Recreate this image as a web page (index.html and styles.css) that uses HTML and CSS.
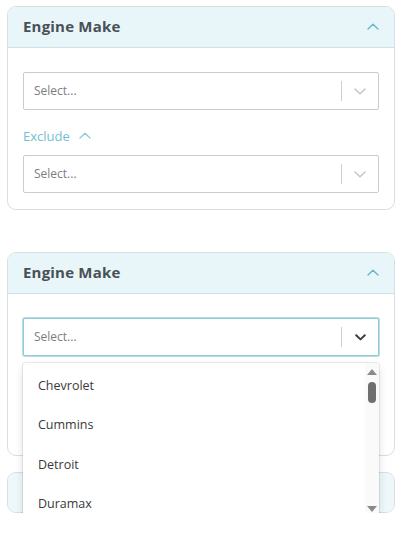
FILE: index.html
```html
<!DOCTYPE html>
<html>
<head>
<meta charset="utf-8">
<link rel="stylesheet" href="styles.css">
</head>
<body>
<div class="page">
  <section class="card">
    <header class="card-header">
      <span class="card-title">Engine Make</span>
      <svg class="hdr-chev" width="12" height="7" viewBox="0 0 12 7"><path d="M1 6 L6 1.2 L11 6" fill="none" stroke="currentColor" stroke-width="1.4" stroke-linecap="round" stroke-linejoin="round"/></svg>
    </header>
    <div class="card-body">
      <div class="select">
        <span class="placeholder">Select...</span>
        <span class="sep"></span>
        <span class="indicator"><svg width="12" height="7" viewBox="0 0 12 7"><path d="M1 1 L6 5.8 L11 1" fill="none" stroke="currentColor" stroke-width="1.4" stroke-linecap="round" stroke-linejoin="round"/></svg></span>
      </div>
      <div class="exclude">
        <span>Exclude</span>
        <svg width="12" height="7" viewBox="0 0 12 7"><path d="M1 6 L6 1.2 L11 6" fill="none" stroke="currentColor" stroke-width="1.3" stroke-linecap="round" stroke-linejoin="round"/></svg>
      </div>
      <div class="select">
        <span class="placeholder">Select...</span>
        <span class="sep"></span>
        <span class="indicator"><svg width="12" height="7" viewBox="0 0 12 7"><path d="M1 1 L6 5.8 L11 1" fill="none" stroke="currentColor" stroke-width="1.4" stroke-linecap="round" stroke-linejoin="round"/></svg></span>
      </div>
    </div>
  </section>

  <section class="card card-second">
    <header class="card-header">
      <span class="card-title">Engine Make</span>
      <svg class="hdr-chev" width="12" height="7" viewBox="0 0 12 7"><path d="M1 6 L6 1.2 L11 6" fill="none" stroke="currentColor" stroke-width="1.4" stroke-linecap="round" stroke-linejoin="round"/></svg>
    </header>
    <div class="card-body">
      <div class="select-wrap">
        <div class="select focused">
          <span class="placeholder">Select...</span>
          <span class="sep"></span>
          <span class="indicator"><svg width="11" height="7" viewBox="0 0 11 7"><path d="M1.2 1.2 L5.5 5.4 L9.8 1.2" fill="none" stroke="currentColor" stroke-width="2" stroke-linecap="round" stroke-linejoin="round"/></svg></span>
        </div>
        <div class="menu">
          <ul class="menu-list">
            <li>Chevrolet</li>
            <li>Cummins</li>
            <li>Detroit</li>
            <li>Duramax</li>
          </ul>
          <div class="scrollbar">
            <span class="arrow-up"></span>
            <span class="thumb"></span>
            <span class="track"></span>
            <span class="arrow-down"></span>
          </div>
        </div>
      </div>
      <div class="covered"></div>
    </div>
  </section>

  <section class="card card-collapsed">
    <div class="collapsed-header"></div>
  </section>
</div>
</body>
</html>
```

FILE: styles.css
```css
* { box-sizing: border-box; }
html, body { margin: 0; padding: 0; background: #fff; }
body {
  font-family: "Open Sans", "Lato", sans-serif;
  color: #333;
}
.page {
  width: 401px;
  padding: 6px 7px 0 7px;
}
.card {
  width: 388px;
  border: 1px solid #d8dfe2;
  border-radius: 9px;
  background: #fff;
}
.card-second { margin-top: 42px; }
.card-collapsed {
  margin-top: 16px;
  background: #eef7fa;
}
.card-header {
  height: 41px;
  background: #e8f6fa;
  border-bottom: 1px solid #cde2e7;
  border-radius: 8px 8px 0 0;
  display: flex;
  align-items: center;
  justify-content: space-between;
  padding: 0 15px 2px 15px;
}
.collapsed-header {
  height: 39px;
  border-radius: 8px;
  background: #eef7fa;
}
.card-title {
  font-size: 15px;
  font-weight: 700;
  color: #4a5056;
  letter-spacing: 0.2px;
}
.hdr-chev { color: #62b9ca; }
.card-body {
  padding: 24px 15px 16px 15px;
}
.select {
  height: 38px;
  border: 1px solid #cccccc;
  border-radius: 2px;
  display: flex;
  align-items: center;
  background: #fff;
}
.select.focused {
  border-color: #93cad7;
  box-shadow: 0 0 0 1px #b6dce5;
}
.placeholder {
  flex: 1;
  padding: 0 0 2px 10px;
  font-size: 12px;
  color: #7d7d7d;
}
.sep {
  width: 1px;
  align-self: stretch;
  margin: 8px 0;
  background: #cfcfcf;
}
.indicator {
  width: 36px;
  display: flex;
  align-items: center;
  justify-content: center;
  color: #c4c4c4;
}
.focused .indicator { color: #3e3e3e; }
.exclude {
  display: flex;
  align-items: center;
  gap: 9px;
  height: 20px;
  margin: 16px 0 9px 0;
  font-size: 13px;
  color: #72c0cf;
}
.exclude svg { color: #8ccbd8; margin-top: -2px; }
.covered { height: 83px; }
.select-wrap { position: relative; }
.menu {
  position: absolute;
  top: 45px;
  left: 0;
  width: 356px;
  height: 153px;
  background: #fff;
  border-radius: 3px;
  box-shadow: 0 0 0 1px rgba(0,0,0,0.08), 0 4px 10px rgba(0,0,0,0.12);
  display: flex;
  overflow: hidden;
  z-index: 5;
}
.menu-list {
  list-style: none;
  margin: 0;
  padding: 3px 0 0 0;
  flex: 1;
}
.menu-list li {
  height: 39.3px;
  line-height: 39px;
  padding-left: 15px;
  font-size: 12.5px;
  color: #3a3a3a;
}
.scrollbar {
  width: 14px;
  background: #fafafa;
  display: flex;
  flex-direction: column;
  align-items: center;
  padding: 6px 0 4px 0;
}
.arrow-up {
  width: 0; height: 0;
  border-left: 5px solid transparent;
  border-right: 5px solid transparent;
  border-bottom: 6px solid #8a8a8a;
}
.thumb {
  width: 8px;
  height: 21px;
  margin-top: 7px;
  border-radius: 4px;
  background: #6f6f6f;
}
.track { flex: 1; }
.arrow-down {
  width: 0; height: 0;
  border-left: 5px solid transparent;
  border-right: 5px solid transparent;
  border-top: 6px solid #8a8a8a;
}
```
